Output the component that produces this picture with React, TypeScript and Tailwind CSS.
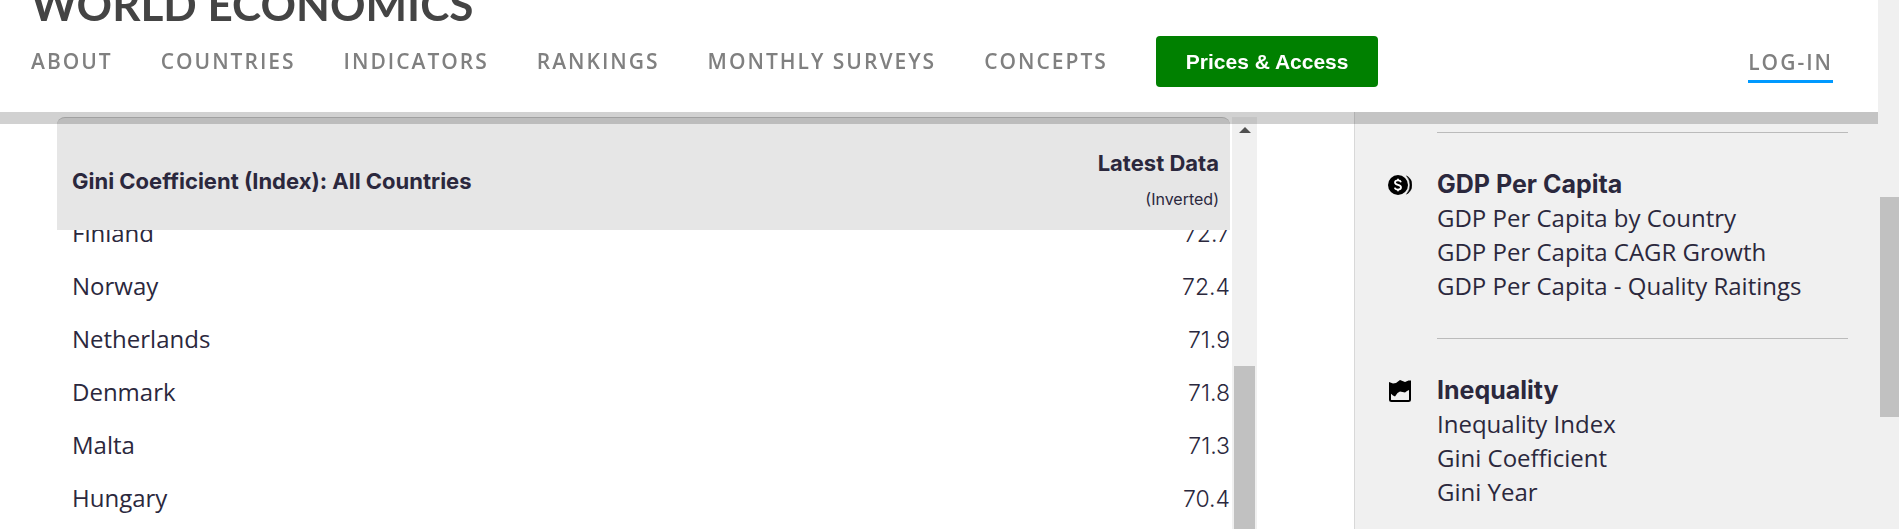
import { useEffect, useRef } from 'react';

type Country = {
  name: string;
  value: string;
};

type Topic = {
  title: string;
  icon: React.ReactNode;
  links: string[];
};

const navItems = ['About', 'Countries', 'Indicators', 'Rankings', 'Monthly Surveys', 'Concepts'];

const countries: Country[] = [
  { name: 'Finland', value: '72.7' },
  { name: 'Norway', value: '72.4' },
  { name: 'Netherlands', value: '71.9' },
  { name: 'Denmark', value: '71.8' },
  { name: 'Malta', value: '71.3' },
  { name: 'Hungary', value: '70.4' },
];

function CoinIcon() {
  return (
    <svg viewBox="0 0 24 20" className="w-6 h-5" aria-hidden="true">
      <circle cx="10" cy="10" r="10" fill="#000" />
      <path d="M18.500 .8a10.500 10.500 0 0 1 0 18.400a14 14 0 0 0 0-18.400z" fill="#000" stroke="#000" strokeWidth=".5" />
      <path
        d="M13 7.200c-.4-1.200-1.500-1.800-3-1.800-1.700 0-3 .8-3 2.200 0 3.200 6 1.500 6 4.700 0 1.500-1.300 2.300-3 2.300s-2.900-.7-3.200-2M10 3.800v1.600M10 14.600v1.600"
        fill="none"
        stroke="#fff"
        strokeWidth="1.800"
      />
    </svg>
  );
}

function AreaChartIcon() {
  return (
    <svg viewBox="0 0 22 22" className="w-[22px] h-[22px] ml-px" aria-hidden="true">
      <path d="M1 3v16.500q0 1.500 1.500 1.500h17q1.500 0 1.500-1.500V3" fill="none" stroke="#000" strokeWidth="2" />
      <path
        d="M0 2l4 1.500 3-.5 4-3 5 2 3.500-1.500L22 .5V9l-4 2-2 1.500-5-1-2.500 1.500L6 16.500l-2-1L0 12z"
        fill="#000"
      />
    </svg>
  );
}

const topics: Topic[] = [
  {
    title: 'GDP Per Capita',
    icon: <CoinIcon />,
    links: ['GDP Per Capita by Country', 'GDP Per Capita CAGR Growth', 'GDP Per Capita - Quality Raitings'],
  },
  {
    title: 'Inequality',
    icon: <AreaChartIcon />,
    links: ['Inequality Index', 'Gini Coefficient', 'Gini Year'],
  },
];

function Header() {
  return (
    <header className="relative z-20 h-28 shrink-0 bg-white px-[31px] shadow-[0_12px_0_rgba(0,0,0,0.18)]">
      <div className="flex h-6 items-end overflow-hidden">
        <a href="/" className="font-[Lato,sans-serif] text-[44px] leading-10 font-bold text-[#444]">
          WORLD ECONOMICS
        </a>
      </div>
      <nav className="mt-3 flex h-[51px] items-center text-[21px] leading-7 font-semibold tracking-[2px] text-[#808080] uppercase">
        <ul className="flex items-center gap-12 pb-0.5">
          {navItems.map((item) => (
            <li key={item}>
              <a href="#">{item}</a>
            </li>
          ))}
        </ul>
        <button
          type="button"
          className="ml-12 h-[51px] rounded bg-[#008000] px-[30px] font-['Liberation_Sans',sans-serif] text-[21px] font-bold tracking-normal text-white"
        >
          Prices &amp; Access
        </button>
        <a href="#" className="mt-2 mr-[14px] ml-auto border-b-[3px] border-[#0099ff] pb-1">
          Log-in
        </a>
      </nav>
    </header>
  );
}

function CountryTable() {
  const scroller = useRef<HTMLDivElement>(null);

  useEffect(() => {
    if (scroller.current) scroller.current.scrollTop = 24;
  }, []);

  return (
    <div className="mt-[5px] flex min-w-0 flex-1 gap-0.5">
      <div ref={scroller} className="flex-1 overflow-y-auto pb-8 [scrollbar-width:none]">
        <table className="w-full border-separate border-spacing-0">
          <thead className="sticky top-0 z-10 font-[Inter,sans-serif]">
            <tr className="h-[113px] text-[22px] leading-8 font-bold">
              <th className="rounded-tl-lg border-t border-[#c4c4c4] bg-[#e6e6e6] pt-[14px] pl-[15px] text-left">
                Gini Coefficient (Index): All Countries
              </th>
              <th className="rounded-tr-lg border-t border-[#c4c4c4] bg-[#e6e6e6] pt-[14px] pr-[11px] text-right">
                Latest Data
                <span className="block pt-1 text-base leading-8 font-normal">(Inverted)</span>
              </th>
            </tr>
          </thead>
          <tbody className="text-2xl">
            {countries.map((country) => (
              <tr key={country.name} className="h-[53px]">
                <td className="pl-[15px]">{country.name}</td>
                <td className="pt-[3px] text-right font-[Inter,sans-serif] text-[23px] font-light">{country.value}</td>
              </tr>
            ))}
          </tbody>
        </table>
      </div>
      <div className="flex w-[25px] flex-col items-center bg-[#f0f0f0] pt-[10px]" aria-hidden="true">
        <svg viewBox="0 0 12 6" className="h-1.5 w-3">
          <path d="M6 0l6 6H0z" fill="#505050" />
        </svg>
        <div className="mt-[233px] w-[21px] flex-1 bg-[#c1c1c1]" />
      </div>
    </div>
  );
}

function Sidebar() {
  return (
    <aside className="w-[524px] shrink-0 overflow-hidden border-l border-[#d8d8d8] bg-[#f0f0f0] pt-5 pr-[30px] pl-[33px]">
      {topics.map((topic) => (
        <section key={topic.title} className="flex h-[206px]">
          <div className="flex h-[22px] w-[49px] shrink-0 items-center mt-[42px]">{topic.icon}</div>
          <div className="flex-1 border-t border-[#bbb] pt-[34px]">
            <h2 className="font-[Inter,sans-serif] text-[25px] leading-[34px] font-bold">{topic.title}</h2>
            <ul className="text-2xl leading-[34px]">
              {topic.links.map((link) => (
                <li key={link}>
                  <a href="#">{link}</a>
                </li>
              ))}
            </ul>
          </div>
        </section>
      ))}
    </aside>
  );
}

export default function App() {
  return (
    <div className="flex h-screen overflow-hidden bg-white font-['Open_Sans',sans-serif] text-[#2b283d]">
      <div className="flex min-w-0 flex-1 flex-col overflow-hidden">
        <Header />
        <main className="flex min-h-0 flex-1">
          <div className="flex min-w-0 flex-1 pr-[97px] pl-[57px]">
            <CountryTable />
          </div>
          <Sidebar />
        </main>
      </div>
      <div className="w-[21px] bg-[#f0f0f0] pt-[197px] pl-0.5" aria-hidden="true">
        <div className="h-[220px] bg-[#c1c1c1]" />
      </div>
    </div>
  );
}
